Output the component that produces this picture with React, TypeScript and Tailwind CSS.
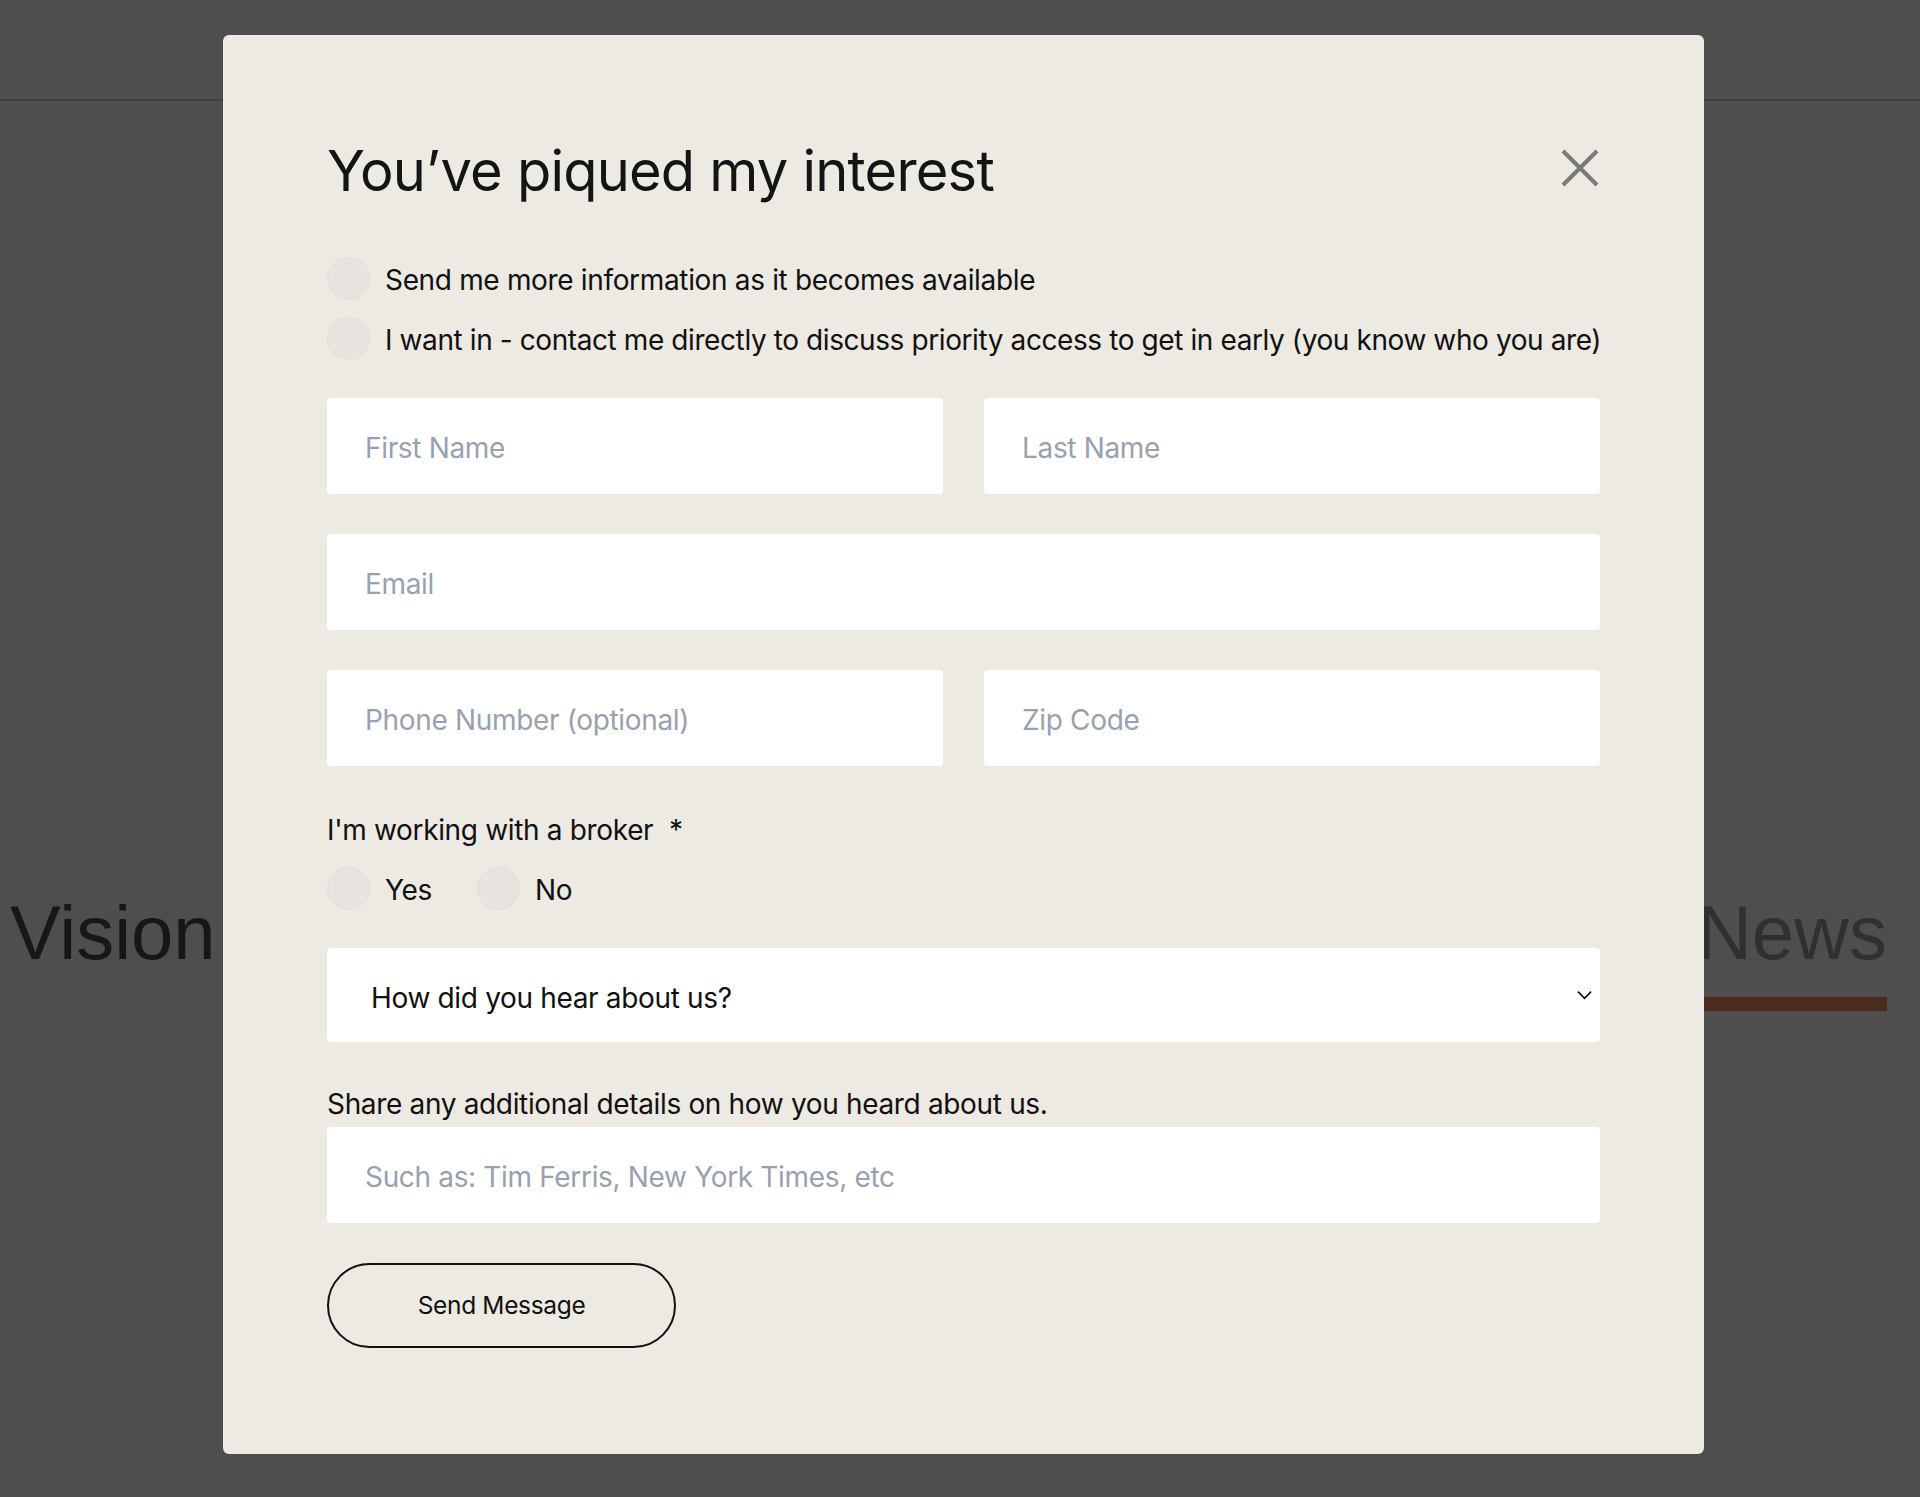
import React from 'react';

function Radio({ label, tight }: { label: string; tight?: boolean }) {
  return (
    <label className="flex items-center gap-[15px] h-[43px] whitespace-nowrap">
      <span className="w-[43px] h-[43px] shrink-0 rounded-full bg-[#e7e3de] border border-[#e2ded9]" />
      <span className={tight ? 'pt-[3px] tracking-[-0.0145em]' : 'pt-[3px]'}>{label}</span>
    </label>
  );
}

function Field({ placeholder }: { placeholder: string }) {
  return (
    <div className="h-[96px] bg-white rounded-[4px] flex items-center pl-[38px] pt-[3px] text-[#98a1ae]">
      {placeholder}
    </div>
  );
}

export default function App() {
  return (
    <div className="relative w-[1920px] h-[1497px] bg-[#4e4e4e] overflow-hidden font-['Liberation_Sans',sans-serif]">
      {/* page behind the overlay */}
      <div className="h-[101px] border-b-2 border-[#3f3f3f]" />
      <div className="flex justify-between items-start pl-[10px] pr-[33px] mt-[794px]">
        <div className="text-[76px] leading-none text-[#171717]">Vision</div>
        <div className="flex flex-col items-end">
          <div className="text-[76px] leading-none text-[#303030]">News</div>
          <div className="mt-[26px] w-[183px] h-[14px] bg-[#4b2a20]" />
        </div>
      </div>

      {/* modal */}
      <div className="absolute left-[223px] top-[35px] w-[1481px] h-[1419px] bg-[#ede9e3] rounded-[6px] pt-[108px] px-[104px] pb-[105px] font-['Inter',sans-serif] text-[#111111] text-[28px] tracking-[-0.012em]">
        <div className="flex justify-between items-center">
          <h2 className="text-[56px] leading-none tracking-[-0.014em] h-[56px] text-[#141414]">You’ve piqued my interest</h2>
          <button className="w-[38px] h-[38px] mr-[1px] mb-[6px]" aria-label="Close">
            <svg viewBox="0 0 38 38" className="w-[38px] h-[38px]">
              <path d="M2 2 L36 36 M36 2 L2 36" stroke="#7a7a7a" strokeWidth="4" />
            </svg>
          </button>
        </div>

        <div className="mt-[58px] flex flex-col gap-[17px]">
          <Radio label="Send me more information as it becomes available" />
          <Radio tight label="I want in - contact me directly to discuss priority access to get in early (you know who you are)" />
        </div>

        <div className="mt-[38px] flex flex-col gap-[40px]">
          <div className="grid grid-cols-2 gap-x-[41px]">
            <Field placeholder="First Name" />
            <Field placeholder="Last Name" />
          </div>
          <Field placeholder="Email" />
          <div className="grid grid-cols-2 gap-x-[41px]">
            <Field placeholder="Phone Number (optional)" />
            <Field placeholder="Zip Code" />
          </div>
        </div>

        <div className="mt-[47px] leading-[34px]">
          I'm working with a broker <span className="ml-[8px]">*</span>
        </div>
        <div className="mt-[20px] flex items-center">
          <div className="w-[150px]">
            <Radio label="Yes" />
          </div>
          <Radio label="No" />
        </div>

        <div className="mt-[38px] h-[94px] bg-white rounded-[4px] flex items-center justify-between pl-[44px] pr-[8px]">
          <span className="pt-[6px]">How did you hear about us?</span>
          <svg viewBox="0 0 16 10" className="w-[15px] h-[10px]">
            <path d="M1 1.5 L8 8.5 L15 1.5" fill="none" stroke="#111" strokeWidth="1.8" />
          </svg>
        </div>

        <div className="mt-[45px] leading-[34px]">Share any additional details on how you heard about us.</div>
        <div className="mt-[6px]">
          <Field placeholder="Such as: Tim Ferris, New York Times, etc" />
        </div>

        <button className="mt-[40px] w-[349px] h-[85px] rounded-full border-2 border-[#111] text-[24.5px] text-[#111] flex items-center justify-center">
          Send Message
        </button>
      </div>
    </div>
  );
}
